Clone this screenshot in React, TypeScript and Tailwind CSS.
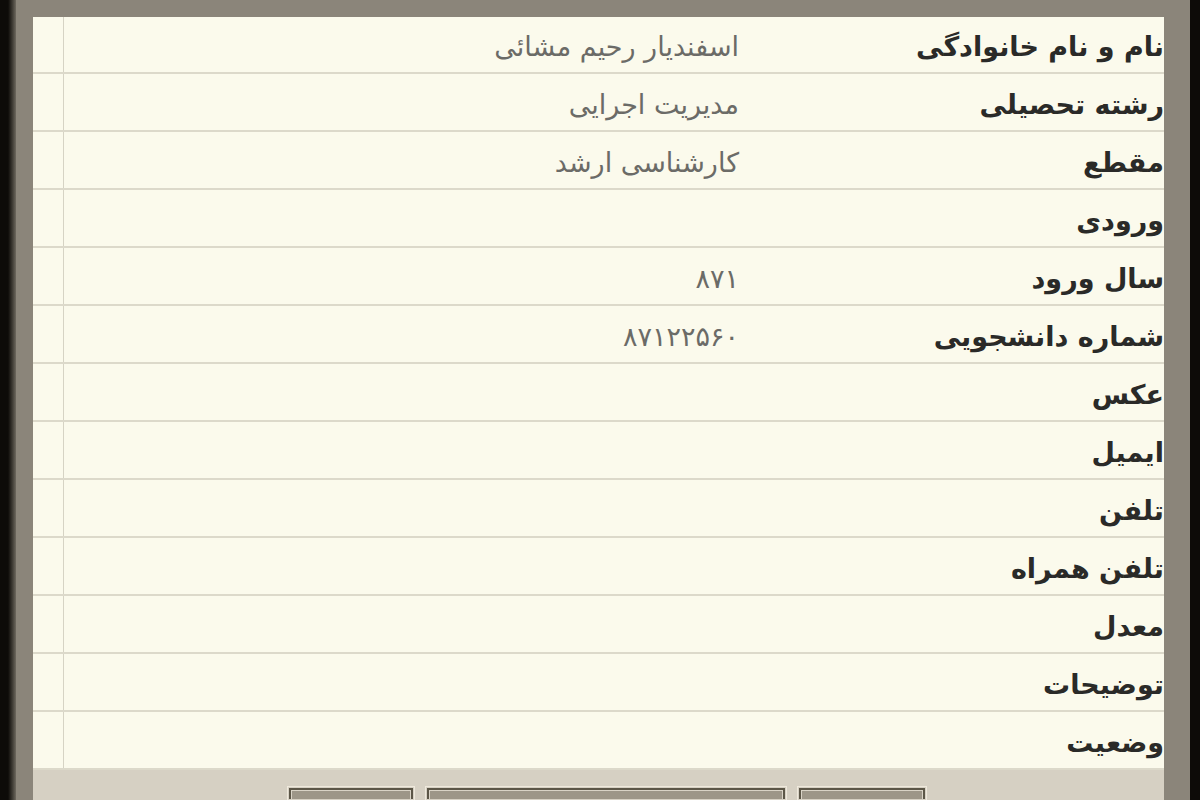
import React from 'react';

const rows: { label: string; value?: string; digits?: boolean }[] = [
  { label: 'نام و نام خانوادگی', value: 'اسفندیار رحیم مشائی' },
  { label: 'رشته تحصیلی', value: 'مدیریت اجرایی' },
  { label: 'مقطع', value: 'کارشناسی ارشد' },
  { label: 'ورودی' },
  { label: 'سال ورود', value: '۸۷۱', digits: true },
  { label: 'شماره دانشجویی', value: '۸۷۱۲۲۵۶۰', digits: true },
  { label: 'عکس' },
  { label: 'ایمیل' },
  { label: 'تلفن' },
  { label: 'تلفن همراه' },
  { label: 'معدل' },
  { label: 'توضیحات' },
  { label: 'وضعیت' },
];

const fontStack = { fontFamily: '"DejaVu Sans", "Noto Sans", sans-serif' };

const Button = ({ width }: { width: string }) => (
  <div className={`${width} h-[14px] border-t border-x border-[#efe9dc] p-[1px]`}>
    <div className="h-full border-t-2 border-x-2 border-[#5c5647] bg-[#9d9688]">
      <div className="h-full border-t border-x border-[#d9d3c6]" />
    </div>
  </div>
);

export default function App() {
  return (
    <div className="flex h-[800px] w-[1200px] overflow-hidden bg-[#0d0b08]" style={fontStack}>
      <div className="w-[16px] shrink-0 bg-gradient-to-r from-[#0d0b08] via-[#0d0b08] to-[#6e695f]" />
      <div className="flex flex-1 bg-[#8b857a] pl-[17px] pt-[17px] pr-[26px]">
        <div className="flex flex-1 flex-col bg-[#fbfaec]">
          <div className="flex flex-col">
            {rows.map((r, i) => (
              <div
                key={r.label}
                className={`flex ${i === 0 ? 'h-[57px]' : 'h-[58px]'} border-b-2 border-[#dcd9ca]`}
              >
                <div className="w-[31px] shrink-0 border-r border-[#d6d3c4]" />
                <div className="flex flex-1 items-center justify-end pr-[7px] pt-[4px]">
                  {r.value && (
                    <span
                      dir="rtl"
                      className={`text-[27px] leading-none text-[#6b6b67] ${r.digits ? 'tracking-[0.07em]' : ''}`}
                    >
                      {r.value}
                    </span>
                  )}
                </div>
                <div className="flex w-[418px] shrink-0 items-center justify-end pt-[4px]">
                  <span dir="rtl" className="text-[27px] font-bold leading-none text-[#2a2a28]">
                    {r.label}
                  </span>
                </div>
              </div>
            ))}
          </div>
          <div className="flex flex-1 items-end gap-[10px] bg-[#d6d0c3] pl-[254px]">
            <Button width="w-[128px]" />
            <Button width="w-[362px]" />
            <Button width="w-[130px]" />
          </div>
        </div>
      </div>
      <div className="w-[10px] shrink-0 bg-[#0d0b08]" />
    </div>
  );
}
